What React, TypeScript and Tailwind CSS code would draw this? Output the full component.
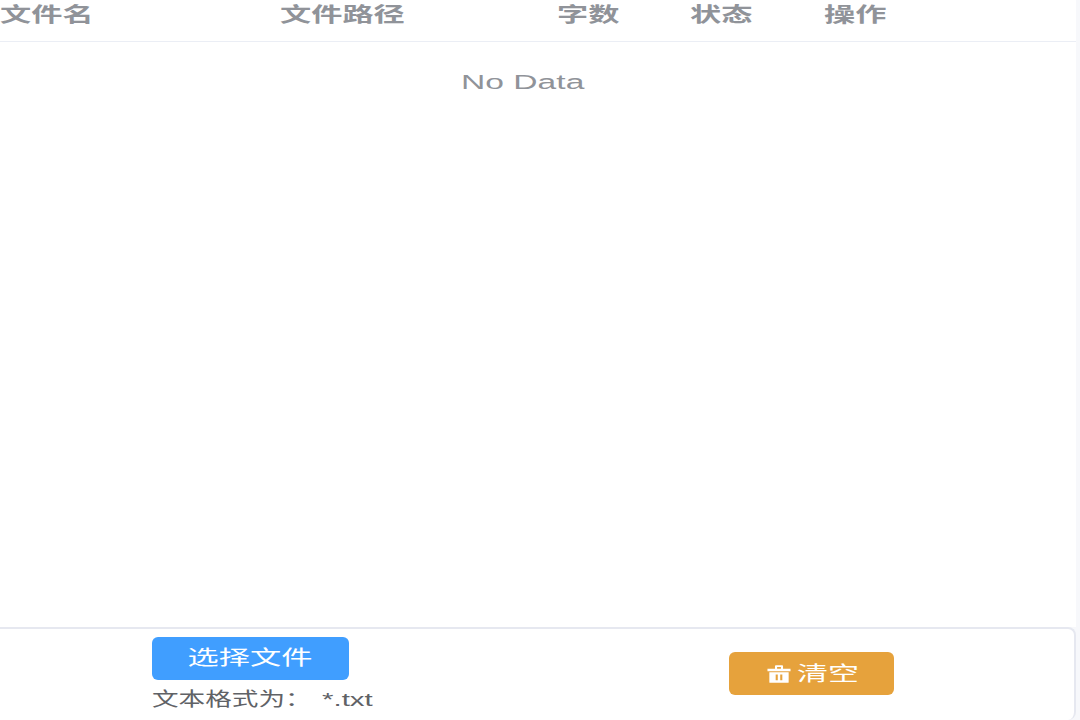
import React from "react";

function Wide({ children, className = "" }: { children: React.ReactNode; className?: string }) {
  return (
    <span className={`inline-block origin-left whitespace-nowrap ${className}`}>{children}</span>
  );
}

function Head({ w, children }: { w: string; children: React.ReactNode }) {
  return (
    <div className={w}>
      <Wide className="scale-x-[1.56] text-[20px] font-bold leading-[28px] text-[#909399]">{children}</Wide>
    </div>
  );
}

export default function App() {
  return (
    <div className="flex h-[720px] w-[1080px] flex-col overflow-hidden bg-[#f7f8fb] font-['Liberation_Sans','Noto_Sans_CJK_SC',sans-serif]">
      <div className="mr-1 flex min-h-0 flex-1 flex-col bg-white">
        <div className="flex h-[42px] shrink-0 border-b border-[#ebeef5] pt-px">
          <Head w="w-[280px]">文件名</Head>
          <Head w="w-[277px]">文件路径</Head>
          <Head w="w-[133px]">字数</Head>
          <Head w="w-[134px]">状态</Head>
          <Head w="w-auto">操作</Head>
        </div>
        <div className="flex justify-center pt-[26px] pr-[30px]">
          <span className="inline-block scale-x-[1.68] text-[20px] leading-[28px] text-[#909399]">No Data</span>
        </div>
      </div>
      <div className="flex h-[93px] shrink-0 pr-[4px]">
        <div className="-ml-2 flex flex-1 rounded-[8px] border-2 border-b-0 border-[#e6e8f0] bg-white">
          <div className="ml-[158px] flex w-[577px] flex-col pt-[8px]">
            <button className="flex h-[43px] w-[197px] items-center justify-center rounded-[6px] bg-[#409eff] pr-[2px] pb-[2px] text-white">
              <span className="inline-block scale-x-[1.56] text-[20px]">选择文件</span>
            </button>
            <div className="mt-[6px] flex h-[28px] text-[#606266]">
              <Wide className="w-[170px] scale-x-[1.4] text-[19px] leading-[28px]">文本格式为：</Wide>
              <Wide className="scale-x-[1.55] text-[19px] leading-[28px]">*.txt</Wide>
            </div>
          </div>
          <div className="pt-[23px]">
            <button className="flex h-[43px] w-[165px] items-center rounded-[6px] bg-[#e6a23c] pl-[38px] text-white">
              <svg viewBox="0 0 1024 1024" className="h-[18px] w-[24px]" preserveAspectRatio="none" fill="currentColor">
                <path
                  fillRule="evenodd"
                  d="M340 220V60a40 40 0 0 1 40-40h264a40 40 0 0 1 40 40v160h320v130H20V220zm90 0h164v-110H430zM100 410h824v570a30 30 0 0 1-30 30H130a30 30 0 0 1-30-30zm270 130v330h90V540zm194 0v330h90V540z"
                />
              </svg>
              <Wide className="ml-[6px] scale-x-[1.55] text-[20px]">清空</Wide>
            </button>
          </div>
        </div>
      </div>
    </div>
  );
}
